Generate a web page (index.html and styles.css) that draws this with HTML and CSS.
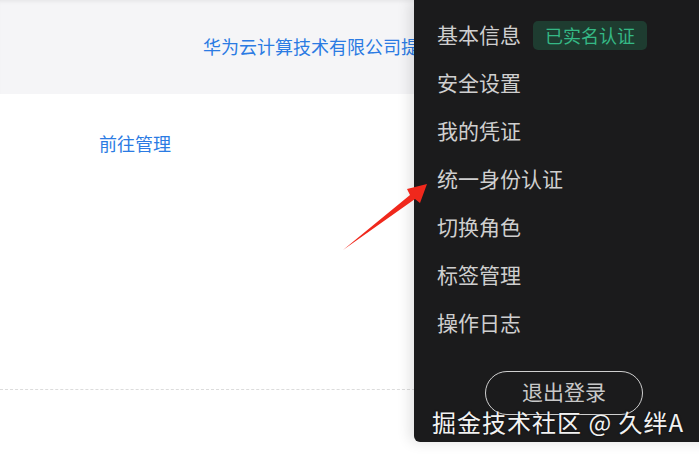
FILE: index.html
```html
<!DOCTYPE html>
<html lang="zh-CN">
<head>
  <meta charset="UTF-8">
  <meta name="viewport" content="width=device-width, initial-scale=1.0">
  <title>账号中心</title>
  <link rel="stylesheet" href="styles.css">
</head>
<body>
  <div class="page">
    <div class="top-band">
      <a class="provider" href="#">华为云计算技术有限公司提供</a>
    </div>
    <div class="content">
      <a class="manage" href="#">前往管理</a>
    </div>
    <div class="divider"></div>
  </div>

  <div class="user-menu">
    <ul class="menu-list">
      <li class="menu-item">基本信息 <span class="badge">已实名认证</span></li>
      <li class="menu-item">安全设置</li>
      <li class="menu-item">我的凭证</li>
      <li class="menu-item">统一身份认证</li>
      <li class="menu-item">切换角色</li>
      <li class="menu-item">标签管理</li>
      <li class="menu-item">操作日志</li>
    </ul>
    <button class="logout">退出登录</button>
  </div>

  <!-- 标注箭头 -->
  <svg class="arrow" width="100" height="80" viewBox="0 0 100 80">
    <polygon points="3,70 70,15 67,9 87,4 80,23 75,19" fill="#f0281c"/>
  </svg>

  <div class="watermark">掘金技术社区 @ 久绊A</div>
</body>
</html>
```

FILE: styles.css
```css
html, body {
  margin: 0;
  overflow: hidden;
  height: 454px;
}

body {
  position: relative;
  font-family: "Noto Sans CJK SC", "Microsoft YaHei", sans-serif;
  background: #fff;
}

a {
  text-decoration: none;
  color: #2b7be3;
}

.top-band {
  height: 94px;
  background: #f5f5f7;
  box-shadow: inset 0 4px 4px -3px rgba(0, 0, 0, 0.08);
  display: flex;
  align-items: center;
  padding-left: 203px;
}

.provider {
  font-size: 18px;
  white-space: nowrap;
  margin-top: -3px;
}

.content {
  height: 294px;
  padding-left: 99px;
  padding-top: 36px;
  box-sizing: border-box;
}

.manage {
  font-size: 18px;
}

.divider {
  border-top: 1px dashed #dcdcdc;
  width: 420px;
  margin-top: 1px;
}

/* 右侧下拉菜单 */
.user-menu {
  position: absolute;
  top: 0;
  left: 414px;
  width: 300px;
  height: 442px;
  background: #1b1b1c;
  border-radius: 0 0 0 6px;
  box-shadow: -4px 0 14px rgba(0, 0, 0, 0.12);
  box-sizing: border-box;
  padding-top: 10px;
  display: flex;
  flex-direction: column;
}

.menu-list {
  list-style: none;
  margin: 0;
  padding: 0 0 0 23px;
}

.menu-item {
  height: 48px;
  line-height: 48px;
  font-size: 21px;
  color: #cfcfcf;
  display: flex;
  align-items: center;
  gap: 12px;
}

.badge {
  background: #1e3c30;
  color: #35b885;
  font-size: 18px;
  line-height: 29px;
  height: 29px;
  padding: 0 12px;
  border-radius: 5px;
  margin-top: 2px;
}

.logout {
  align-self: center;
  margin-top: 25px;
  width: 158px;
  height: 44px;
  border: 1px solid #cfcfcf;
  border-radius: 22px;
  background: transparent;
  color: #c8c8c8;
  font-family: inherit;
  font-size: 21px;
  padding: 0 0 4px;
}

.arrow {
  position: absolute;
  left: 340px;
  top: 180px;
}

.watermark {
  position: absolute;
  left: 432px;
  top: 404px;
  font-size: 24px;
  letter-spacing: 1px;
  color: #f2f2f2;
  text-shadow: 0 0 2px rgba(0, 0, 0, 0.7);
  white-space: nowrap;
}
```
